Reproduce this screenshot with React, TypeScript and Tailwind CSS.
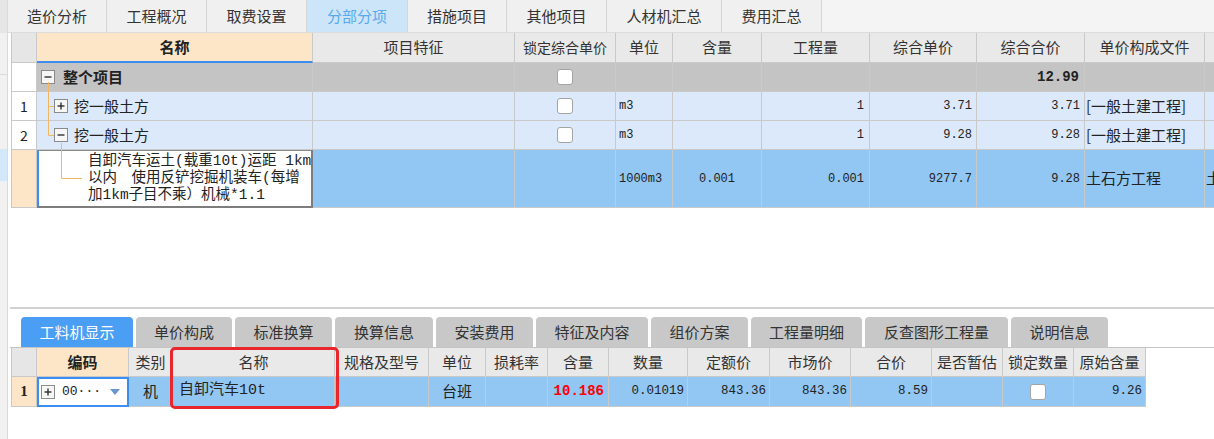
import React from "react";

const MONO = "font-['Liberation_Mono','Noto_Sans_CJK_SC',monospace]";
const BD = "border-r border-b border-[#c9c9c9]";

function C({
  w,
  className = "",
  b = BD,
  children,
}: {
  w: string;
  className?: string;
  b?: string;
  children?: React.ReactNode;
}) {
  return (
    <div className={`${w} shrink-0 h-full flex items-center overflow-hidden whitespace-nowrap ${b} ${className}`}>
      {children}
    </div>
  );
}

function Box({ plus }: { plus?: boolean }) {
  return (
    <span className="inline-flex w-[14px] h-[14px] shrink-0 border border-[#8a8a8a] bg-[#f6f6f6] items-center justify-center">
      <svg width="10" height="10" viewBox="0 0 10 10">
        <line x1="1.5" y1="5" x2="8.5" y2="5" stroke="#222" strokeWidth="1.3" />
        {plus && <line x1="5" y1="1.5" x2="5" y2="8.5" stroke="#222" strokeWidth="1.3" />}
      </svg>
    </span>
  );
}

function Check() {
  return <span className="inline-block w-[16px] h-[16px] bg-white border border-[#a4a4a4] rounded-[3px]" />;
}

const TW = [
  "w-[25px]",
  "w-[276px]",
  "w-[202px]",
  "w-[101px]",
  "w-[57px]",
  "w-[89px]",
  "w-[108px]",
  "w-[107px]",
  "w-[108px]",
  "w-[120px]",
  "w-[60px]",
];

const BW = [
  "w-[25px]",
  "w-[92px]",
  "w-[44px]",
  "w-[162px]",
  "w-[94px]",
  "w-[57px]",
  "w-[62px]",
  "w-[61px]",
  "w-[79px]",
  "w-[82px]",
  "w-[81px]",
  "w-[81px]",
  "w-[71px]",
  "w-[71px]",
  "w-[72px]",
];

const topTabs: { label: string; w: string; active?: boolean }[] = [
  { label: "造价分析", w: "w-[99px]" },
  { label: "工程概况", w: "w-[100px]" },
  { label: "取费设置", w: "w-[100px]" },
  { label: "分部分项", w: "w-[101px]", active: true },
  { label: "措施项目", w: "w-[99px]" },
  { label: "其他项目", w: "w-[100px]" },
  { label: "人材机汇总", w: "w-[115px]" },
  { label: "费用汇总", w: "w-[100px]" },
];

const bottomTabs: { label: string; w: string; active?: boolean }[] = [
  { label: "工料机显示", w: "w-[112px]", active: true },
  { label: "单价构成", w: "w-[96px]" },
  { label: "标准换算", w: "w-[97px]" },
  { label: "换算信息", w: "w-[98px]" },
  { label: "安装费用", w: "w-[97px]" },
  { label: "特征及内容", w: "w-[112px]" },
  { label: "组价方案", w: "w-[97px]" },
  { label: "工程量明细", w: "w-[111px]" },
  { label: "反查图形工程量", w: "w-[143px]" },
  { label: "说明信息", w: "w-[97px]" },
];

export default function App() {
  const topHeaders = ["项目特征", "锁定综合单价", "单位", "含量", "工程量", "综合单价", "综合合价", "单价构成文件", ""];
  const bottomHeaders = ["名称", "规格及型号", "单位", "损耗率", "含量", "数量", "定额价", "市场价", "合价", "是否暂估", "锁定数量", "原始含量"];

  return (
    <div className="w-[1214px] h-[439px] overflow-hidden bg-white flex font-['Noto_Sans_CJK_SC','Noto_Sans',sans-serif] text-[#333]">
      {/* left strip */}
      <div className="w-[8px] shrink-0 flex flex-col bg-[#f1f1f1] border-r border-[#dadada]">
        <div className="h-[33px] bg-[#e6e6e6]" />
        <div className="h-[42px] border-b border-[#dadada]" />
        <div className="h-[74px]" />
        <div className="h-[32px] bg-[#d3e8f9]" />
      </div>

      <div className="flex-1 min-w-0 flex flex-col">
        {/* top tabs */}
        <div className="h-[33px] shrink-0 flex bg-[#f4f4f4] border-b border-[#dcdcdc]">
          {topTabs.map((t) => (
            <div
              key={t.label}
              className={`${t.w} shrink-0 h-full flex items-center justify-center text-[15px] border-r border-[#d6d6d6] ${
                t.active ? "bg-[#cce5f8] text-[#5aa9ef]" : "bg-[#f0f0f0] text-[#333]"
              }`}
            >
              {t.label}
            </div>
          ))}
        </div>

        {/* top grid area */}
        <div className="h-[274px] shrink-0 overflow-hidden">
          <div className="ml-[3px] border-l border-[#c9c9c9] w-[1300px]">
            {/* header */}
            <div className="flex h-[30px] text-[15px]">
              <C w={TW[0]} className="bg-[#e6e6e6]" />
              <C
                w={TW[1]}
                b="border-r border-r-[#c9c9c9] border-b-2 border-b-[#3d8ef0]"
                className="bg-[#fde5c8] justify-center font-bold text-[#222]"
              >
                名称
              </C>
              {topHeaders.map((h, i) => (
                <C
                  key={i}
                  w={TW[i + 2]}
                  className={`bg-[#e9e9e9] justify-center ${i === 1 ? "text-[14px]" : ""}`}
                >
                  {h}
                </C>
              ))}
            </div>

            {/* body */}
            <div className="relative">
              {/* row: 整个项目 */}
              <div className="flex h-[29px] bg-[#c4c4c4]">
                <C w={TW[0]} className="bg-white" />
                <C w={TW[1]} className="pl-[4px] gap-[8px]">
                  <Box />
                  <span className="text-[15px] font-bold text-[#222]">整个项目</span>
                </C>
                <C w={TW[2]} />
                <C w={TW[3]} className="justify-center">
                  <Check />
                </C>
                <C w={TW[4]} />
                <C w={TW[5]} />
                <C w={TW[6]} />
                <C w={TW[7]} />
                <C w={TW[8]} className={`justify-end pr-[5px] text-[14px] font-bold text-[#222] ${MONO}`}>
                  12.99
                </C>
                <C w={TW[9]} />
                <C w={TW[10]} />
              </div>

              {/* rows 1, 2 */}
              {[
                { n: "1", plus: true, a: "3.71" },
                { n: "2", plus: false, a: "9.28" },
              ].map((r) => (
                <div key={r.n} className="flex h-[29px] bg-[#dce9fb]">
                  <C w={TW[0]} className="bg-white justify-center text-[14px] text-[#222]">
                    {r.n}
                  </C>
                  <C w={TW[1]} className="pl-[17px] gap-[6px]">
                    <Box plus={r.plus} />
                    <span className="text-[15px] text-[#222]">挖一般土方</span>
                  </C>
                  <C w={TW[2]} />
                  <C w={TW[3]} className="justify-center">
                    <Check />
                  </C>
                  <C w={TW[4]} className={`pl-[3px] text-[12px] text-[#222] ${MONO}`}>
                    m3
                  </C>
                  <C w={TW[5]} />
                  <C w={TW[6]} className={`justify-end pr-[5px] text-[12px] text-[#222] ${MONO}`}>
                    1
                  </C>
                  <C w={TW[7]} className={`justify-end pr-[4px] text-[12px] text-[#222] ${MONO}`}>
                    {r.a}
                  </C>
                  <C w={TW[8]} className={`justify-end pr-[4px] text-[12px] text-[#222] ${MONO}`}>
                    {r.a}
                  </C>
                  <C w={TW[9]} className="pl-[1px] text-[15px] text-[#222]">
                    [一般土建工程]
                  </C>
                  <C w={TW[10]} />
                </div>
              ))}

              {/* row 3 */}
              <div className="flex h-[58px] bg-[#92c7f4]">
                <C w={TW[0]} className="bg-[#fde5c8]" />
                <C
                  w={TW[1]}
                  b="border-t border-l-2 border-r-2 border-b-2 border-t-[#8a8a8a] border-l-[#3d8ef0] border-r-[#7d7d7d] border-b-[#7d7d7d]"
                  className="bg-white pl-[49px]"
                >
                  <div className={`text-[14.5px] leading-[17px] text-[#222] ${MONO}`}>
                    <div>自卸汽车运土(载重10t)运距 1km</div>
                    <div>以内　使用反铲挖掘机装车(每增</div>
                    <div>加1km子目不乘）机械*1.1</div>
                  </div>
                </C>
                <C w={TW[2]} />
                <C w={TW[3]} />
                <C w={TW[4]} className={`pl-[3px] text-[12px] text-[#222] ${MONO}`}>
                  1000m3
                </C>
                <C w={TW[5]} className={`justify-center text-[12px] text-[#222] ${MONO}`}>
                  0.001
                </C>
                <C w={TW[6]} className={`justify-end pr-[5px] text-[12px] text-[#222] ${MONO}`}>
                  0.001
                </C>
                <C w={TW[7]} className={`justify-end pr-[4px] text-[12px] text-[#222] ${MONO}`}>
                  9277.7
                </C>
                <C w={TW[8]} className={`justify-end pr-[4px] text-[12px] text-[#222] ${MONO}`}>
                  9.28
                </C>
                <C w={TW[9]} className="pl-[1px] text-[15px] text-[#222]">
                  土石方工程
                </C>
                <C w={TW[10]} className="pl-[1px] text-[15px] text-[#222]">
                  土石方
                </C>
              </div>

              {/* tree lines */}
              <svg className="absolute left-0 top-0 pointer-events-none" width="120" height="130">
                <g stroke="#f3b763" strokeWidth="1" fill="none">
                  <line x1="36.5" y1="19" x2="36.5" y2="72.5" />
                  <line x1="36.5" y1="43.5" x2="42" y2="43.5" />
                  <line x1="36.5" y1="72.5" x2="42" y2="72.5" />
                  <line x1="49.5" y1="80" x2="49.5" y2="115.5" />
                  <line x1="49.5" y1="115.5" x2="70" y2="115.5" />
                </g>
              </svg>
            </div>
          </div>
        </div>

        {/* divider */}
        <div className="h-[2px] shrink-0 ml-[2px] bg-[#d2d2d2]" />

        {/* bottom tabs */}
        <div className="h-[39px] shrink-0 ml-[2px] pt-[8px] pl-[11px] flex gap-[3px] border-b border-[#c4c4c4]">
          {bottomTabs.map((t) => (
            <div
              key={t.label}
              className={`${t.w} shrink-0 h-[30px] rounded-t-[4px] flex items-center justify-center text-[15px] ${
                t.active ? "bg-[#4a9ef4] text-white" : "bg-[#c8c8c8] text-[#333]"
              }`}
            >
              {t.label}
            </div>
          ))}
        </div>

        {/* bottom grid */}
        <div className="relative ml-[3px]">
          <div className="border-l border-[#c9c9c9] w-fit">
            <div className="flex h-[29px] text-[15px]">
              <C w={BW[0]} className="bg-[#e6e6e6]" />
              <C w={BW[1]} className="bg-[#fde5c8] justify-center font-bold text-[#222]">
                编码
              </C>
              <C w={BW[2]} className="bg-[#e9e9e9] justify-center">
                类别
              </C>
              {bottomHeaders.map((h, i) => (
                <C key={h} w={BW[i + 3]} className="bg-[#e9e9e9] justify-center">
                  {h}
                </C>
              ))}
            </div>
            <div className="flex h-[30px] bg-[#92c7f4] text-[#222]">
              <C w={BW[0]} className="bg-[#fde5c8] justify-center font-['Liberation_Serif',serif] font-bold text-[15px]">
                1
              </C>
              <C w={BW[1]} b="border-2 border-[#3d8ef0]" className="bg-white pl-[2px] pr-[7px]">
                <Box plus />
                <span className={`ml-[7px] text-[13px] ${MONO}`}>00···</span>
                <span className="ml-auto flex">
                  <svg width="10" height="6" viewBox="0 0 10 6">
                    <path d="M0 0 H10 L5 6 Z" fill="#6a98cc" />
                  </svg>
                </span>
              </C>
              <C w={BW[2]} className="justify-center text-[15px]">
                机
              </C>
              <C w={BW[3]} className={`pl-[6px] text-[15px] ${MONO}`}>
                <span>自卸汽车10t</span>
              </C>
              <C w={BW[4]} />
              <C w={BW[5]} className="justify-center text-[15px]">
                台班
              </C>
              <C w={BW[6]} />
              <C w={BW[7]} className={`justify-end pr-[4px] text-[14px] font-bold text-[#ff0000] ${MONO}`}>
                10.186
              </C>
              <C w={BW[8]} className={`justify-end pr-[3px] text-[12.5px] ${MONO}`}>
                0.01019
              </C>
              <C w={BW[9]} className={`justify-end pr-[3px] text-[12.5px] ${MONO}`}>
                843.36
              </C>
              <C w={BW[10]} className={`justify-end pr-[3px] text-[12.5px] ${MONO}`}>
                843.36
              </C>
              <C w={BW[11]} className={`justify-end pr-[3px] text-[12.5px] ${MONO}`}>
                8.59
              </C>
              <C w={BW[12]} />
              <C w={BW[13]} className="justify-center">
                <Check />
              </C>
              <C w={BW[14]} className={`justify-end pr-[3px] text-[12.5px] ${MONO}`}>
                9.26
              </C>
            </div>
          </div>
          {/* red highlight */}
          <div className="absolute left-[159px] top-[-1px] w-[169px] h-[62px] border-[3px] border-[#e8262b] rounded-[5px] pointer-events-none" />
        </div>
      </div>
    </div>
  );
}
